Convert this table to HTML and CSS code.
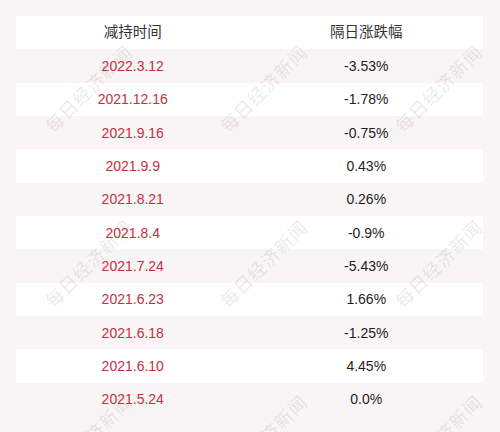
FILE: index.html
```html
<!DOCTYPE html>
<html lang="zh-CN">
<head>
<meta charset="utf-8">
<title>减持时间</title>
<link rel="stylesheet" href="styles.css">
</head>
<body>
<div class="page">
  <div class="table">
    <div class="row head"><div class="cell">减持时间</div><div class="cell">隔日涨跌幅</div></div>
    <div class="row"><div class="cell date">2022.3.12</div><div class="cell">-3.53%</div></div>
    <div class="row"><div class="cell date">2021.12.16</div><div class="cell">-1.78%</div></div>
    <div class="row"><div class="cell date">2021.9.16</div><div class="cell">-0.75%</div></div>
    <div class="row"><div class="cell date">2021.9.9</div><div class="cell">0.43%</div></div>
    <div class="row"><div class="cell date">2021.8.21</div><div class="cell">0.26%</div></div>
    <div class="row"><div class="cell date">2021.8.4</div><div class="cell">-0.9%</div></div>
    <div class="row"><div class="cell date">2021.7.24</div><div class="cell">-5.43%</div></div>
    <div class="row"><div class="cell date">2021.6.23</div><div class="cell">1.66%</div></div>
    <div class="row"><div class="cell date">2021.6.18</div><div class="cell">-1.25%</div></div>
    <div class="row"><div class="cell date">2021.6.10</div><div class="cell">4.45%</div></div>
    <div class="row"><div class="cell date">2021.5.24</div><div class="cell">0.0%</div></div>
  </div>
  <div class="marks" aria-hidden="true">
    <div class="mark"><span>每日经济新闻</span></div>
    <div class="mark"><span>每日经济新闻</span></div>
    <div class="mark"><span>每日经济新闻</span></div>
    <div class="mark"><span>每日经济新闻</span></div>
    <div class="mark"><span>每日经济新闻</span></div>
    <div class="mark"><span>每日经济新闻</span></div>
    <div class="mark"><span>每日经济新闻</span></div>
    <div class="mark"><span>每日经济新闻</span></div>
    <div class="mark"><span>每日经济新闻</span></div>
  </div>
</div>
</body>
</html>
```

FILE: styles.css
```css
html, body {
  margin: 0;
  padding: 0;
  background: #f9f4f5;
}
.page {
  position: relative;
  width: 500px;
  height: 432px;
  overflow: hidden;
  padding-top: 16px;
  box-sizing: border-box;
  font-family: "Liberation Sans", "Noto Sans CJK SC", sans-serif;
}
.table {
  margin-left: 16px;
  width: 467px;
}
.row {
  display: grid;
  grid-template-columns: 1fr 1fr;
  height: 33.333px;
  align-items: center;
}
.row:nth-child(even) {
  background: transparent;
}
.row:nth-child(odd) {
  background: #ffffff;
}
.cell {
  text-align: center;
  font-size: 14px;
  color: #1e1e1e;
  line-height: 1;
}
.head .cell {
  font-size: 14.5px;
  color: #333333;
}
.cell.date {
  color: #c5303f;
  padding-right: 0;
}
.marks {
  position: absolute;
  left: 0;
  top: 0;
  display: grid;
  grid-template-columns: repeat(3, 175px);
  grid-template-rows: repeat(3, 175px);
  pointer-events: none;
}
.mark {
  display: flex;
  align-items: center;
  justify-content: center;
}
.mark span {
  display: block;
  transform: rotate(-45deg);
  font-family: "Noto Sans CJK SC", sans-serif;
  font-size: 18px;
  letter-spacing: 1px;
  color: rgba(90, 60, 65, 0.12);
  white-space: nowrap;
}
```
